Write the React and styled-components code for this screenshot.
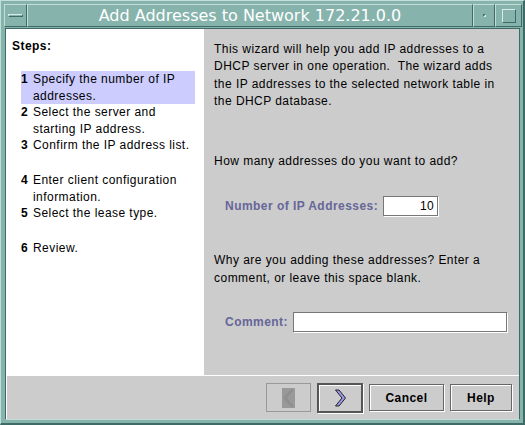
import React from 'react';
import styled, { createGlobalStyle } from 'styled-components';

const GlobalStyle = createGlobalStyle`
  html, body {
    margin: 0;
    padding: 0;
    background: #86b4ad;
  }
  body {
    font-family: "Liberation Sans", Arial, sans-serif;
    font-size: 12px;
    letter-spacing: 0.45px;
    color: #000;
  }
`;

const Window = styled.div`
  position: relative;
  width: 525px;
  height: 425px;
  box-sizing: border-box;
  background: #86b4ad;
  border-top: 1px solid #c3ddd8;
  border-left: 1px solid #c3ddd8;
  border-right: 2px solid #3f6b66;
  border-bottom: 2px solid #3f6b66;
  padding: 3px 1px 3px 3px;
  display: flex;
  flex-direction: column;
`;

const TitleBar = styled.div`
  display: flex;
  height: 23px;
  flex-shrink: 0;
`;

const FrameButton = styled.div`
  box-sizing: border-box;
  width: ${(p) => p.w}px;
  border-top: 1px solid #c3ddd8;
  border-left: 1px solid #c3ddd8;
  border-right: 1px solid #3f6b66;
  border-bottom: 1px solid #3f6b66;
  display: flex;
  align-items: center;
  justify-content: center;
`;

const MenuBar = styled.div`
  width: 15px;
  height: 3px;
  box-sizing: border-box;
  border-top: 1px solid #d6ebe7;
  border-left: 1px solid #d6ebe7;
  border-right: 1px solid #3f6b66;
  border-bottom: 1px solid #3f6b66;
`;

const MinDot = styled.div`
  width: 3px;
  height: 3px;
  box-sizing: border-box;
  border-top: 1px solid #3f6b66;
  border-left: 1px solid #3f6b66;
  border-right: 1px solid #d6ebe7;
  border-bottom: 1px solid #d6ebe7;
`;

const MaxBox = styled.div`
  width: 14px;
  height: 14px;
  box-sizing: border-box;
  border-top: 1px solid #d6ebe7;
  border-left: 1px solid #d6ebe7;
  border-right: 1px solid #3f6b66;
  border-bottom: 1px solid #3f6b66;
`;

const Title = styled.div`
  flex: 1;
  box-sizing: border-box;
  border-top: 1px solid #c3ddd8;
  border-left: 1px solid #c3ddd8;
  border-right: 1px solid #3f6b66;
  border-bottom: 1px solid #3f6b66;
  display: flex;
  align-items: center;
  justify-content: center;
  color: #fff;
  font-family: "DejaVu Sans", "Liberation Sans", sans-serif;
  font-size: 16px;
  letter-spacing: 0;
`;

const Client = styled.div`
  flex: 1;
  margin: 1px 2px 0 1px;
  display: flex;
  flex-direction: column;
  border-top: 1px solid #3f6b66;
  border-left: 1px solid #3f6b66;
  border-right: 1px solid #3f6b66;
  border-bottom: 1px solid #c3ddd8;
  background: #cccccc;
`;

const Main = styled.div`
  display: flex;
  height: 346px;
  flex-shrink: 0;
`;

const Sidebar = styled.div`
  width: 199px;
  box-sizing: border-box;
  background: #fff;
  padding: 9px 9px 0 5px;
`;

const StepsHeading = styled.div`
  font-weight: bold;
  line-height: 17px;
  padding-left: 1px;
`;

const StepList = styled.div`
  margin-top: 16px;
  padding-left: 10px;
`;

const Step = styled.div`
  display: flex;
  line-height: 16.5px;
  background: ${(p) => (p.active ? '#ccccff' : 'transparent')};
  margin-bottom: ${(p) => (p.gap ? '18.5px' : '0')};
`;

const StepNum = styled.span`
  font-weight: bold;
  width: 12px;
  flex-shrink: 0;
`;

const Content = styled.div`
  flex: 1;
  padding: 12px 12px 0 10px;
  display: flex;
  flex-direction: column;
`;

const Para = styled.p`
  margin: 0 0 ${(p) => p.mb || 0}px;
  line-height: 17.3px;
`;

const FieldRow = styled.div`
  display: flex;
  align-items: center;
  gap: 5px;
  padding-left: 11px;
  margin-bottom: ${(p) => p.mb || 0}px;
`;

const Label = styled.label`
  font-weight: bold;
  color: #666699;
`;

const Field = styled.div`
  box-sizing: border-box;
  width: ${(p) => p.w}px;
  height: 20px;
  background: #fff;
  border: 1px solid #777;
  box-shadow: 1px 1px 0 #fff;
  padding: 0 3px;
  display: flex;
  align-items: center;
  justify-content: flex-end;
`;

const ButtonBar = styled.div`
  flex: 1;
  border-top: 1px solid #fff;
  border-left: 1px solid #fff;
  display: flex;
  align-items: center;
  justify-content: flex-end;
  padding-right: 7px;
  gap: 6px;
`;

const Button = styled.div`
  box-sizing: border-box;
  width: ${(p) => p.w}px;
  height: ${(p) => p.h || 27}px;
  border: ${(p) => (p.focus ? '2px solid #555' : p.disabled ? '1px solid #999' : '1px solid #666')};
  box-shadow: ${(p) => (p.disabled ? 'none' : 'inset 1px 1px 0 #fff, 1px 1px 0 #fff')};
  display: flex;
  align-items: center;
  justify-content: center;
  font-weight: bold;
  color: #000;
`;

const BackIcon = () => (
  <svg width="13" height="20" viewBox="0 0 13 20">
    <rect x="0" y="0" width="13" height="20" fill="#999" />
    <path d="M9 2 L11 2 L4 10 L11 18 L9 18 L2 10 Z" fill="#999" stroke="#888" strokeWidth="1" />
  </svg>
);

const NextIcon = () => (
  <svg width="13" height="18" viewBox="0 0 13 18">
    <path d="M1.5 1 L5 1 L11.5 9 L5 17 L1.5 17 L8 9 Z" fill="#9999ee" stroke="#222" strokeWidth="1" />
  </svg>
);

const steps = [
  { n: 1, text: 'Specify the number of IP addresses.', active: true },
  { n: 2, text: 'Select the server and starting IP address.' },
  { n: 3, text: 'Confirm the IP address list.', gap: true },
  { n: 4, text: 'Enter client configuration information.' },
  { n: 5, text: 'Select the lease type.', gap: true },
  { n: 6, text: 'Review.' },
];

export default function App() {
  return (
    <>
      <GlobalStyle />
      <Window>
        <TitleBar>
          <FrameButton w={23}><MenuBar /></FrameButton>
          <Title>Add Addresses to Network 172.21.0.0</Title>
          <FrameButton w={22}><MinDot /></FrameButton>
          <FrameButton w={27}><MaxBox /></FrameButton>
        </TitleBar>
        <Client>
          <Main>
            <Sidebar>
              <StepsHeading>Steps:</StepsHeading>
              <StepList>
                {steps.map((s) => (
                  <Step key={s.n} active={s.active} gap={s.gap}>
                    <StepNum>{s.n}</StepNum>
                    <span>{s.text}</span>
                  </Step>
                ))}
              </StepList>
            </Sidebar>
            <Content>
              <Para mb={43}>
                This wizard will help you add IP addresses to a DHCP server in one operation.&nbsp; The wizard adds the IP addresses to the selected network table in the DHCP database.
              </Para>
              <Para mb={26}>How many addresses do you want to add?</Para>
              <FieldRow mb={36}>
                <Label>Number of IP Addresses:</Label>
                <Field w={55}>10</Field>
              </FieldRow>
              <Para mb={25}>
                Why are you adding these addresses? Enter a comment, or leave this space blank.
              </Para>
              <FieldRow>
                <Label>Comment:</Label>
                <Field w={214} />
              </FieldRow>
            </Content>
          </Main>
          <ButtonBar>
            <Button w={45} h={29} disabled><BackIcon /></Button>
            <Button w={46} h={30} focus><NextIcon /></Button>
            <Button w={75}>Cancel</Button>
            <Button w={62}>Help</Button>
          </ButtonBar>
        </Client>
      </Window>
    </>
  );
}
